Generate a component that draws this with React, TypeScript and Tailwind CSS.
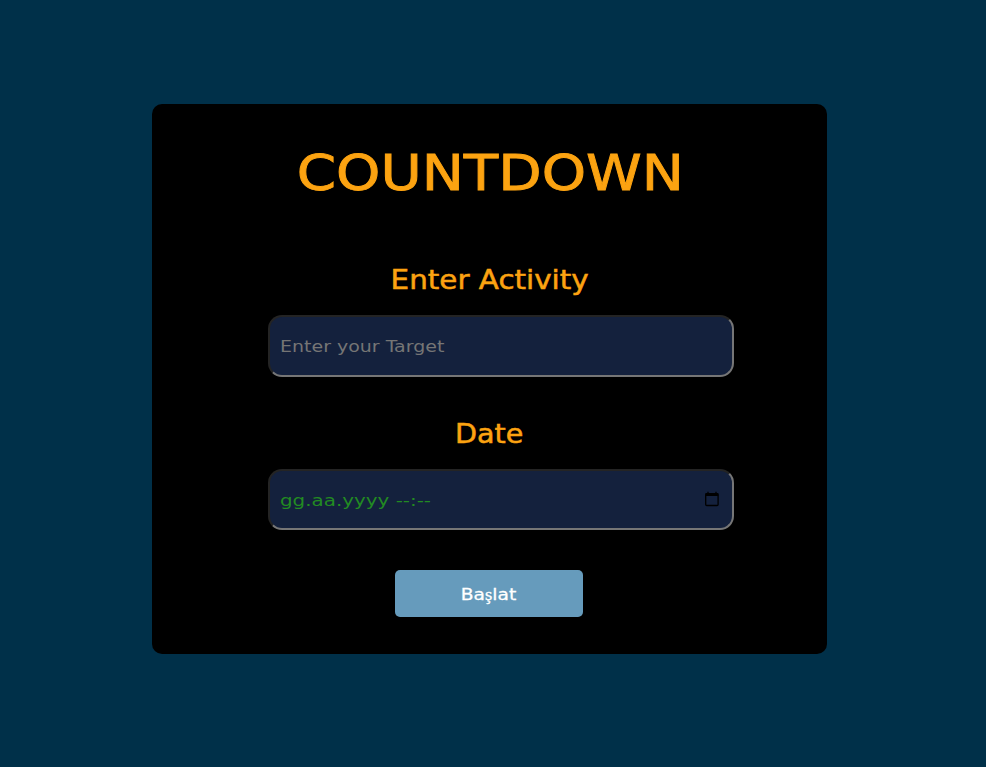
import React from "react";

function CalendarIcon() {
  return (
    <svg width="14" height="16" viewBox="0 0 14 16" fill="none" stroke="#000" className="mb-px shrink-0">
      <rect x=".7" y="2.7" width="12.4" height="11.8" rx="1" strokeWidth="1.3" />
      <path d="M.5 3.6h12.8" strokeWidth="2.8" />
      <path d="M3 .8v2M11 .8v2" strokeWidth="1.3" />
    </svg>
  );
}

const field =
  "ml-[116px] flex w-[466px] items-center rounded-[14px] border-2 border-t-[#242424] border-l-[#242424] border-r-[#767676] border-b-[#767676] bg-[#14213d] px-[10px]";

export default function App() {
  return (
    <main className="flex h-[767px] w-full bg-[#003049] pl-[152px] pt-[104px] font-['DejaVu_Sans',sans-serif]">
      <section className="flex h-[550px] w-[675px] flex-col rounded-[10px] bg-black">
        <h1 className="mt-[40px] h-[60px] pl-px text-center text-[49px] leading-[60px] text-[#fca311]">
          <span className="inline-block scale-x-[1.15] [-webkit-text-stroke:0.9px_#fca311]">COUNTDOWN</span>
        </h1>
        <h2 className="mt-[60px] h-[32px] text-center text-[26px] leading-[32px] text-[#fca311]">
          <span className="inline-block scale-x-[1.13] [-webkit-text-stroke:0.5px_#fca311]">Enter Activity</span>
        </h2>
        <div className={`${field} mt-[19px] h-[62px]`}>
          <span className="mt-px inline-block origin-left scale-x-[1.15] text-[16.5px] leading-[21px] text-[#757575]">Enter your Target</span>
        </div>
        <h2 className="mt-[41px] h-[32px] text-center text-[26px] leading-[32px] text-[#fca311]">
          <span className="inline-block scale-x-[1.1] [-webkit-text-stroke:0.5px_#fca311]">Date</span>
        </h2>
        <div className={`${field} mt-[19px] h-[61px] justify-between pr-[13px]`}>
          <span className="mt-[3px] inline-block origin-left scale-x-[1.205] text-[16.5px] leading-[20px] text-[#228b22]">gg.aa.yyyy --:--</span>
          <CalendarIcon />
        </div>
        <button className="ml-[243px] mt-[40px] h-[47px] w-[188px] rounded-[5px] bg-[#669bbc] pt-[2px] text-[16.5px] leading-[20px] text-white">
          <span className="inline-block scale-x-[1.13] [-webkit-text-stroke:0.3px_white]">
            Ba<span className="font-['Liberation_Serif',serif]">ş</span>lat
          </span>
        </button>
      </section>
    </main>
  );
}
